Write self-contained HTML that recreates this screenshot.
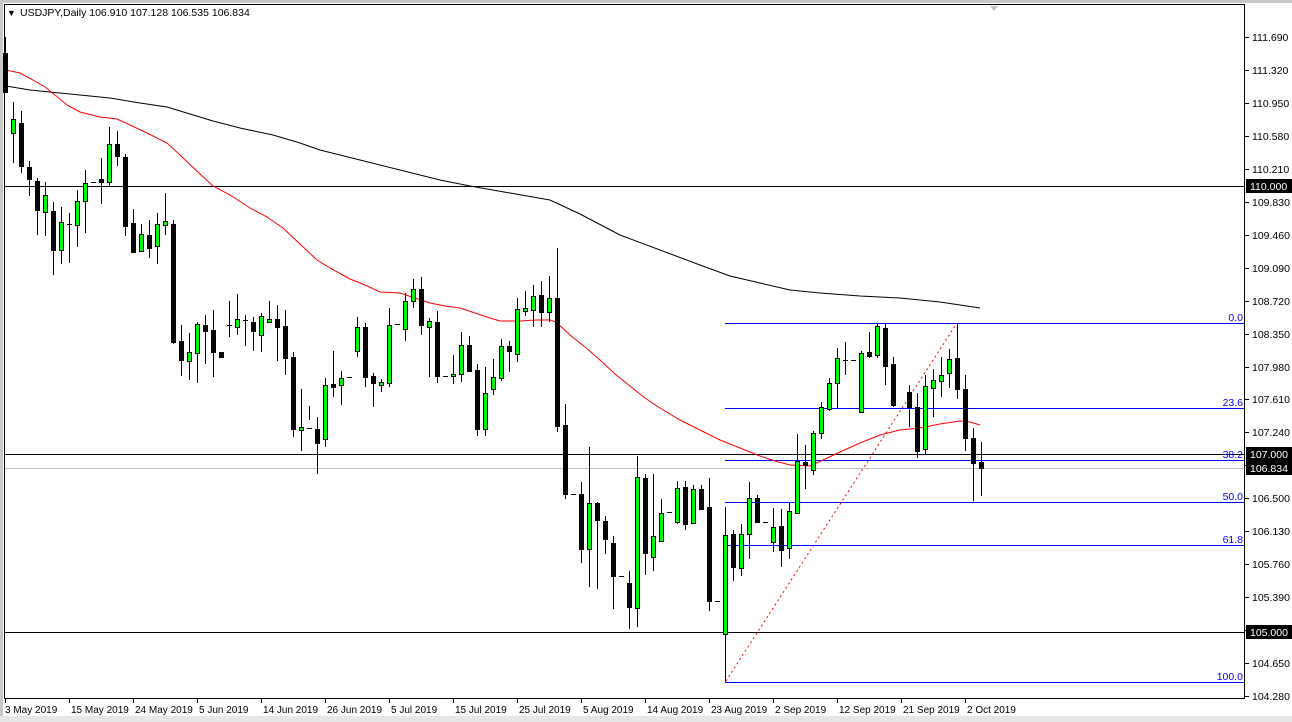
<!DOCTYPE html>
<html><head><meta charset="utf-8"><style>
html,body{margin:0;padding:0;background:#fff;}
svg{display:block;}
text{font-family:"Liberation Sans","DejaVu Sans",sans-serif;}
</style></head><body>
<svg id="c" width="1292" height="722" xmlns="http://www.w3.org/2000/svg" shape-rendering="crispEdges">
<rect x="0" y="0" width="1292" height="722" fill="#fff"/>
<rect x="0" y="0" width="1292" height="3" fill="#c8c8c8"/>
<rect x="0" y="0" width="3" height="722" fill="#c8c8c8"/>
<rect x="0" y="716" width="1292" height="6" fill="#e6e6e6"/>
<rect x="4.5" y="4.5" width="1240" height="694" fill="none" stroke="#000"/>
<g id="g"></g>
<text x="7" y="16" font-size="9">▼</text>
<text x="20" y="16" font-size="10.5">USDJPY,Daily  106.910 107.128 106.535 106.834</text>
</svg>
<script>
var g=document.getElementById('g'),h='';
function L(x1,y1,x2,y2,c,extra){h+='<line x1="'+x1+'" y1="'+y1+'" x2="'+x2+'" y2="'+y2+'" stroke="'+c+'" stroke-width="1" '+(extra||'')+'/>';}
function T(x,y,s,c,a,fs){h+='<text x="'+x+'" y="'+y+'" fill="'+(c||'#000')+'"'+(a?' text-anchor="'+a+'"':'')+' font-size="'+(fs||11)+'">'+s+'</text>';}
L(5,186.5,1244,186.5,'#000');L(5,454.5,1244,454.5,'#000');L(5,632.5,1244,632.5,'#000');
L(5,468.5,1244,468.5,'#c0c0c0');
var fib=[[323,'0.0'],[408,'23.6'],[460,'38.2'],[502,'50.0'],[545,'61.8'],[682,'100.0']];
fib.forEach(function(f){L(725,f[0]+.5,1244,f[0]+.5,'#0000ff');T(1243,f[0]-2,f[1],'#0000ff','end',10.5);});
L(726,681,957,323,'#ff0000','stroke-dasharray="2,3" shape-rendering="auto"');
var blk=[[6,86],[30,90],[50,92],[80,95],[110,98],[140,103],[167,107],[190,114],[213,121],[240,128],[273,135],[300,143],[320,150],[360,160],[400,170],[440,180],[470,186],[510,193],[550,200],[580,214],[620,235],[660,250],[700,265],[730,276],[760,283],[790,290],[820,293],[860,296],[900,298],[940,302],[980,308]];
var red=[[6,70],[20,73],[33,80],[45,87],[55,95],[67,105],[80,112],[100,117],[117,119],[130,125],[145,132],[167,143],[180,155],[200,174],[213,186],[230,195],[250,208],[267,217],[283,228],[300,244],[317,260],[330,268],[350,279],[365,285],[380,292],[400,293],[415,298],[430,303],[445,306],[460,308],[475,313],[490,318],[500,321],[520,321],[535,320],[550,320],[556,322],[570,335],[585,347],[600,360],[615,374],[630,386],[645,398],[660,408],[680,420],[700,430],[720,440],[740,448],[760,456],[775,461],[790,465],[810,466],[825,459],[840,452],[860,443],[880,435],[900,430],[920,428],[940,424],[960,421],[970,422],[980,425]];
function P(a,c){h+='<polyline fill="none" stroke="'+c+'" stroke-width="1" shape-rendering="auto" points="'+a.map(function(p){return p.join(',')}).join(' ')+'"/>';}
P(blk,'#000');P(red,'#ff0000');
var D={"-1":[37,93,53,92,'b'],0:[102,163,119,133,'g'],1:[111,173,123,166,'b'],2:[161,196,167,179,'b'],3:[178,235,181,210,'b'],4:[182,236,195,212,'g'],5:[202,275,211,250,'b'],6:[207,264,222,250,'g'],7:[213,263,224,224,'d'],8:[190,247,201,225,'g'],9:[170,233,183,201,'g'],10:[182,182,182,182,'d'],11:[158,204,179,182,'b'],12:[127,187,144,182,'g'],13:[131,166,144,156,'b'],14:[154,236,157,226,'b'],15:[209,252,223,252,'b'],16:[224,252,234,251,'g'],17:[220,258,235,248,'b'],18:[213,264,224,246,'g'],19:[193,235,221,225,'g'],20:[220,344,224,342,'b'],21:[325,376,341,360,'b'],22:[333,380,352,361,'g'],23:[322,383,324,353,'g'],24:[315,364,325,331,'b'],25:[310,377,330,352,'b'],26:[352,357,352,357,'b'],27:[301,337,325,325,'d'],28:[294,335,319,327,'g'],29:[315,346,320,320,'d'],30:[317,351,322,331,'b'],31:[313,352,316,335,'g'],32:[301,323,319,322,'g'],33:[305,361,319,327,'b'],34:[310,375,326,358,'b'],35:[352,437,357,429,'b'],36:[389,451,427,430,'g'],37:[406,420,428,428,'d'],38:[417,474,429,443,'b'],39:[378,447,385,439,'g'],40:[351,397,384,387,'b'],41:[371,405,378,385,'g'],42:[377,377,377,377,'d'],43:[317,357,327,351,'g'],44:[323,387,327,377,'b'],45:[373,407,376,383,'b'],46:[379,392,382,385,'g'],47:[308,387,325,383,'g'],48:[324,324,324,324,'d'],49:[293,341,301,329,'g'],50:[279,308,289,301,'g'],51:[277,335,289,325,'b'],52:[318,377,321,327,'g'],53:[311,383,322,376,'b'],54:[376,376,376,376,'d'],55:[355,384,374,376,'g'],56:[332,382,345,374,'g'],57:[336,372,345,371,'b'],58:[364,436,370,429,'b'],59:[367,436,393,429,'g'],60:[359,395,377,389,'g'],61:[339,381,346,378,'g'],62:[341,372,346,351,'b'],63:[298,362,309,354,'g'],64:[291,316,308,311,'g'],65:[285,327,296,310,'g'],66:[281,327,295,312,'b'],67:[276,322,298,312,'g'],68:[248,432,298,426,'b'],69:[404,499,425,494,'b'],70:[494,494,494,494,'d'],71:[482,563,494,549,'b'],72:[447,587,503,549,'g'],73:[502,589,503,520,'b'],74:[516,554,521,539,'b'],75:[536,609,543,576,'b'],76:[576,576,576,576,'d'],77:[571,629,583,607,'b'],78:[456,627,477,608,'g'],79:[474,575,478,553,'b'],80:[474,571,536,557,'g'],81:[499,542,513,541,'g'],82:[512,512,512,512,'d'],83:[481,524,488,522,'g'],84:[481,530,487,524,'b'],85:[485,524,489,523,'g'],86:[485,509,489,509,'b'],87:[478,611,507,601,'b'],88:[601,601,601,601,'d'],89:[507,682,535,634,'g'],90:[530,581,534,567,'b'],91:[524,576,534,568,'g'],92:[482,559,498,534,'g'],93:[495,522,498,522,'b'],94:[522,522,522,522,'d'],95:[508,552,527,542,'g'],96:[509,567,526,550,'b'],97:[503,559,511,548,'g'],98:[434,514,461,513,'g'],99:[445,489,462,465,'b'],100:[431,475,433,470,'g'],101:[402,439,407,433,'g'],102:[378,411,383,409,'g'],103:[348,408,358,383,'g'],104:[342,375,360,360,'d'],105:[360,360,360,360,'d'],106:[351,412,353,412,'g'],107:[332,358,352,356,'b'],108:[324,358,326,355,'g'],109:[324,385,328,366,'b'],110:[357,407,364,405,'b'],112:[385,427,392,407,'b'],113:[393,458,407,451,'b'],114:[375,455,386,449,'g'],115:[369,417,380,388,'g'],116:[357,397,375,381,'g'],117:[349,388,359,373,'g'],118:[323,399,358,389,'b'],119:[375,451,389,438,'b'],120:[428,501,438,463,'b'],121:[442,496,462,468,'b']};
for(var k in D){var d=D[k],cx=13+8*(+k);if(cx<5)cx=7;var x=cx+.5;
 if(d[0]<d[1])L(x,d[0],x,d[1],'#000');
 if(d[4]=='d'){L(cx-2,d[2]+.5,cx+3,d[2]+.5,'#000');}
 else if(d[4]=='g'){h+='<rect x="'+(cx-1.5)+'" y="'+(d[2]+.5)+'" width="4" height="'+Math.max(1,d[3]-d[2])+'" fill="#00ff00" stroke="#000"/>';}
 else{h+='<rect x="'+(cx-2)+'" y="'+d[2]+'" width="5" height="'+Math.max(2,d[3]-d[2]+1)+'" fill="#000"/>';}
}
var pr=['111.690','111.320','110.950','110.580','110.210','109.830','109.460','109.090','108.720','108.350','107.980','107.610','107.240','106.870','106.500','106.130','105.760','105.390','105.020','104.650','104.280'];
pr.forEach(function(p,i){var y=Math.round(37+i*32.95);L(1245,y+.5,1249,y+.5,'#000');if(p!='106.870'&&p!='105.020')T(1252,y+4,p,'#000',null,10.5);});
function tag(y,s){h+='<rect x="1246" y="'+(y-7)+'" width="57" height="14" fill="#000"/>';T(1250,y+4,s,'#fff',null,10.5);}
tag(186,'110.000');tag(454,'107.000');tag(468,'106.834');tag(632,'105.000');
var ds=['3 May 2019','15 May 2019','24 May 2019','5 Jun 2019','14 Jun 2019','26 Jun 2019','5 Jul 2019','15 Jul 2019','25 Jul 2019','5 Aug 2019','14 Aug 2019','23 Aug 2019','2 Sep 2019','12 Sep 2019','21 Sep 2019','2 Oct 2019'];
ds.forEach(function(s,i){var x=5+64*i;L(x+.5,699,x+.5,703,'#000');T(x+(i==0?0:2),713,s,'#000',null,10);});
h+='<polygon points="990,6 998,6 994,11" fill="#c0c0c0"/>';
g.innerHTML=h;
</script>
</body></html>
